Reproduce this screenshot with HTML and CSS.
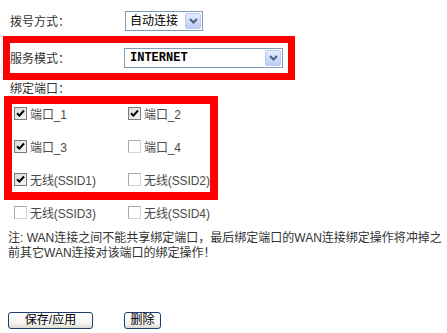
FILE: index.html
```html
<!DOCTYPE html>
<html lang="zh-CN">
<head>
  <meta charset="UTF-8" />
  <title>WAN 连接设置</title>
  <link rel="stylesheet" href="styles.css">
</head>
<body>
  <div class="page">
    <div class="row dial">
      <span class="label dial-label">拨号方式<span class="colon">：</span></span>
      <div class="select dial-select">
        <span class="value">自动连接</span>
        <span class="arrow"><svg width="9" height="6" viewBox="0 0 9 6"><path d="M1 1l3.5 3.5L8 1" stroke="#4d6185" stroke-width="2" fill="none"/></svg></span>
      </div>
    </div>

    <div class="mark mode">
      <span class="label mode-label">服务模式<span class="colon">：</span></span>
      <div class="select mode-select">
        <span class="value mono">INTERNET</span>
        <span class="arrow"><svg width="9" height="6" viewBox="0 0 9 6"><path d="M1 1l3.5 3.5L8 1" stroke="#4d6185" stroke-width="2" fill="none"/></svg></span>
      </div>
    </div>

    <div class="row bind-title"><span class="label">绑定端口<span class="colon">：</span></span></div>

    <div class="mark ports">
      <div class="grid">
        <label class="check"><span class="box on"><svg width="9" height="9" viewBox="0 0 9 9"><path d="M1 4.2l2.4 2.4L8 1.5" stroke="#000" stroke-width="2" fill="none"/></svg></span>端口_1</label>
        <label class="check"><span class="box on"><svg width="9" height="9" viewBox="0 0 9 9"><path d="M1 4.2l2.4 2.4L8 1.5" stroke="#000" stroke-width="2" fill="none"/></svg></span>端口_2</label>
        <label class="check"><span class="box on"><svg width="9" height="9" viewBox="0 0 9 9"><path d="M1 4.2l2.4 2.4L8 1.5" stroke="#000" stroke-width="2" fill="none"/></svg></span>端口_3</label>
        <label class="check"><span class="box"></span>端口_4</label>
        <label class="check"><span class="box on"><svg width="9" height="9" viewBox="0 0 9 9"><path d="M1 4.2l2.4 2.4L8 1.5" stroke="#000" stroke-width="2" fill="none"/></svg></span>无线(SSID1)</label>
        <label class="check"><span class="box"></span>无线(SSID2)</label>
      </div>
    </div>

    <div class="grid extra">
      <label class="check"><span class="box"></span>无线(SSID3)</label>
      <label class="check"><span class="box"></span>无线(SSID4)</label>
    </div>

    <p class="note">注: WAN连接之间不能共享绑定端口<span class="colon">，</span>最后绑定端口的WAN连接绑定操作将冲掉之<br>前其它WAN连接对该端口的绑定操作<span class="colon">！</span></p>

    <div class="actions">
      <button class="btn save">保存/应用</button>
      <button class="btn del">删除</button>
    </div>
  </div>
</body>
</html>
```

FILE: styles.css
```css
* {
  box-sizing: border-box;
}
body {
  margin: 0;
  background: #fff;
  font-family: "Liberation Sans", "Noto Sans CJK SC", sans-serif;
  font-size: 12px;
  color: #333;
  text-spacing-trim: space-all;
}
.page {
  width: 447px;
  padding-top: 11px;
}
.row {
  display: flex;
  align-items: center;
}
.label {
  font-family: "Noto Sans CJK SC", sans-serif;
  color: #333;
  line-height: 16px;
}
/* centred full-width punctuation, as in the original page font */
.colon {
  font-family: "Noto Sans CJK TC", sans-serif;
}
.dial {
  height: 20px;
  padding-left: 10px;
}
.dial-label {
  width: 115px;
}

/* fake select boxes */
.select {
  display: flex;
  align-items: center;
  justify-content: space-between;
  height: 20px;
  border: 1px solid #7f9db9;
  background: #fff;
  color: #000;
  padding: 0 1px 0 4px;
}
.dial-select {
  width: 78px;
}
.mode-select {
  width: 159px;
  padding-left: 5px;
}
.value {
  line-height: 16px;
}
.mono {
  font-family: "Liberation Mono", monospace;
  font-weight: bold;
  font-size: 12px;
}
.arrow {
  display: flex;
  align-items: center;
  justify-content: center;
  width: 16px;
  height: 16px;
  border: 1px solid #bccbeb;
  border-radius: 2px;
  background: linear-gradient(#e3ebfd, #bccdf6);
}

/* red highlight frames */
.mark {
  margin-top: 5px;
  border: 7px solid #f00;
}
.mode {
  display: flex;
  align-items: center;
  width: 292px;
  height: 44px;
  margin-left: 3px;
}
.mode-label {
  width: 114px;
}
.bind-title {
  height: 16px;
  padding-left: 10px;
}
.ports {
  width: 214px;
  height: 104px;
  margin-top: 0;
  margin-left: 4px;
  border-width: 8px;
}
.grid {
  display: grid;
  grid-template-columns: 114px 1fr;
  grid-auto-rows: 18px;
  row-gap: 15px;
  padding-left: 2px;
}
.extra {
  margin-top: 3px;
  padding-left: 14px;
}
.check {
  display: flex;
  align-items: center;
  color: #4a4a4a;
  letter-spacing: -0.1px;
  white-space: nowrap;
}
.box {
  display: flex;
  align-items: center;
  justify-content: center;
  width: 13px;
  height: 13px;
  margin-right: 3px;
  border: 1px solid #a9a9a9;
  border-right-color: #d4d4d4;
  border-bottom-color: #d4d4d4;
  background: #fff;
}
.box.on {
  border: 1px solid #7c7c7c;
  background: linear-gradient(135deg, #dcdcdc, #f4f4f4);
}

.note {
  margin: 9px 0 0 8px;
  line-height: 13px;
  color: #333;
  white-space: nowrap;
}

.actions {
  display: flex;
  margin-top: 52px;
  padding-left: 8px;
  gap: 31px;
}
.btn {
  height: 17px;
  padding: 0;
  border: 1px solid #1c3f6e;
  border-radius: 3px;
  background: linear-gradient(#fff, #f3f3ef 70%, #dcdad0);
  font-family: "Liberation Sans", "Noto Sans CJK SC", sans-serif;
  font-size: 12px;
  line-height: 15px;
  color: #000;
}
.save {
  width: 85px;
}
.del {
  width: 37px;
}
```
